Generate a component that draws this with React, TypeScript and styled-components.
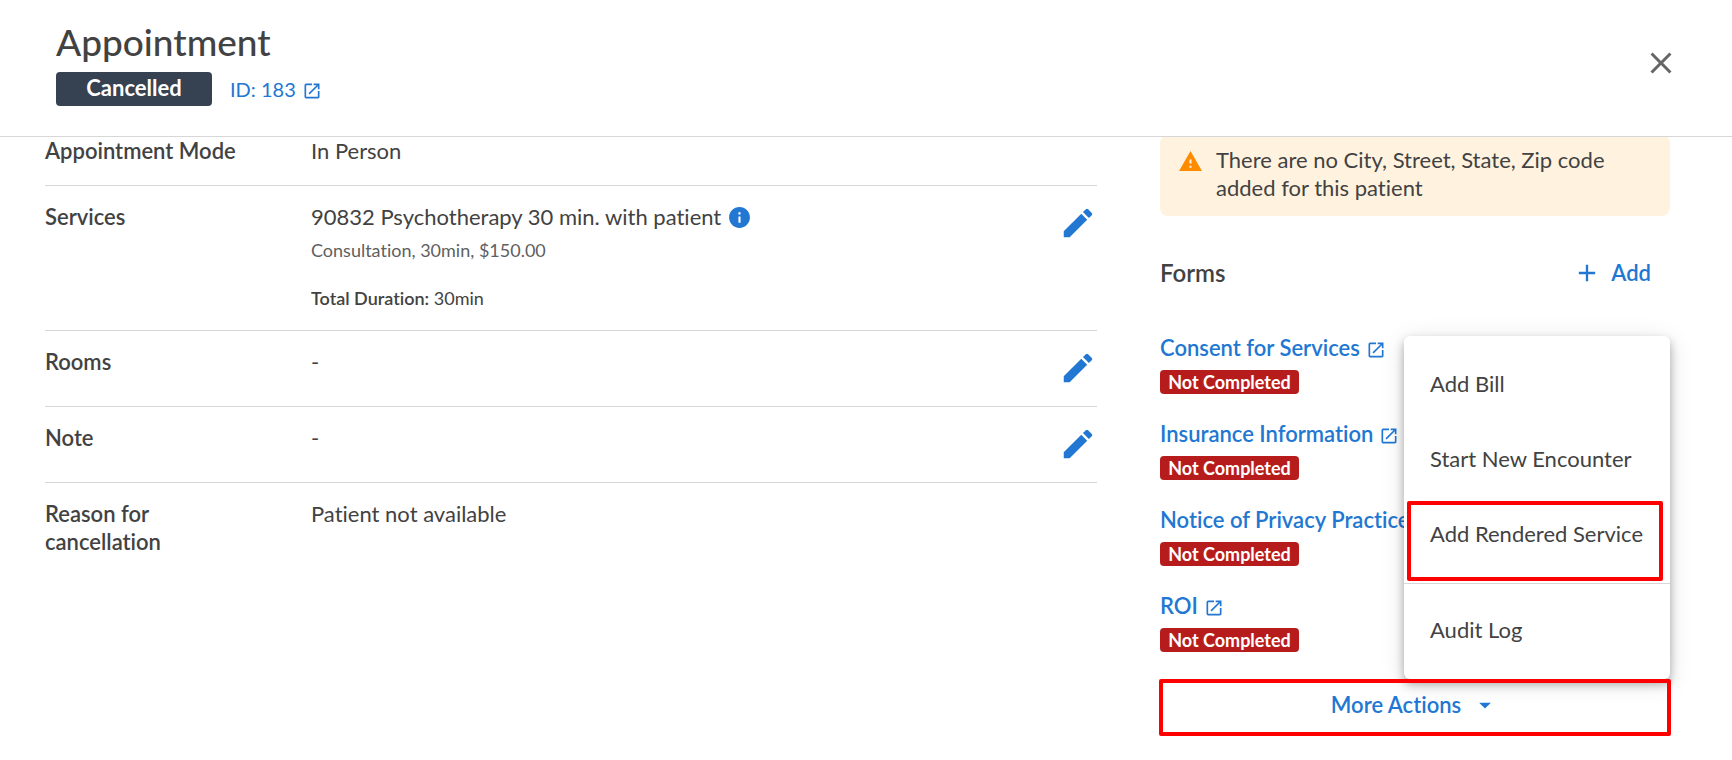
import React from 'react';
import styled, { createGlobalStyle } from 'styled-components';
import {
  MdAdd,
  MdArrowDropDown,
  MdClose,
  MdEdit,
  MdInfo,
  MdOpenInNew,
  MdWarning,
} from 'react-icons/md';

const color = {
  text: '#424242',
  muted: '#5f5f5f',
  link: '#2177d2',
  line: '#d7d7d7',
  slate: '#364152',
  danger: '#b71c1c',
  highlight: '#ff0000',
  warnBg: '#fff3e0',
  warn: '#ff8c00',
};

const GlobalStyle = createGlobalStyle`
  *, *::before, *::after { box-sizing: border-box; }
  body {
    margin: 0;
    background: #fff;
    color: ${color.text};
    font: 400 22px/28px Lato, "Open Sans", sans-serif;
    font-variant-ligatures: none;
  }
  h1, h2, p, ul, dl, dt, dd { margin: 0; padding: 0; font: inherit; }
  ul { list-style: none; }
  button { border: 0; background: none; padding: 0; font: inherit; color: inherit; cursor: pointer; }
  svg { display: block; flex: none; }
`;

const Header = styled.header`
  display: flex;
  align-items: center;
  justify-content: space-between;
  padding: 20px 53px 30px 56px;
  border-bottom: 1px solid ${color.line};
`;

const Title = styled.h1`
  && {
    font-size: 37px;
    font-weight: 500;
    line-height: 44px;
  }
`;

const HeaderMeta = styled.div`
  display: flex;
  align-items: center;
  gap: 18px;
  margin-top: 8px;
`;

const StatusBadge = styled.span`
  min-width: 156px;
  padding: 2px 28px 4px;
  border-radius: 4px;
  background: ${color.slate};
  color: #fff;
  font-weight: 700;
  text-align: center;
`;

const TextLink = styled.a<{ $strong?: boolean }>`
  display: inline-flex;
  align-items: center;
  gap: 6px;
  color: ${color.link};
  font-size: ${(p) => (p.$strong ? 22 : 20)}px;
  font-weight: ${(p) => (p.$strong ? 600 : 400)};
  text-decoration: none;
  white-space: nowrap;

  svg {
    margin-top: 4px;
  }
`;

const CloseButton = styled.button`
  && {
    color: #666;
  }
`;

const Content = styled.main`
  display: grid;
  grid-template-columns: minmax(0, 1fr) 510px;
  column-gap: 63px;
  padding: 0 62px 22px 45px;
  overflow: hidden;
`;

const Details = styled.dl``;

const Row = styled.div<{ $flush?: boolean }>`
  display: grid;
  grid-template-columns: 266px minmax(0, 1fr) auto;
  padding: ${(p) => (p.$flush ? '0 0 20px' : '17px 0 18px')};

  &:not(:last-child) {
    border-bottom: 1px solid ${color.line};
  }
`;

const Label = styled.dt`
  && {
    padding-right: 70px;
    font-weight: 600;
  }
`;

const ServiceName = styled.p`
  display: flex;
  align-items: center;
  gap: 6px;

  svg {
    color: ${color.link};
  }
`;

const SmallLine = styled.p<{ $muted?: boolean }>`
  && {
    margin-top: ${(p) => (p.$muted ? 5 : 20)}px;
    color: ${(p) => (p.$muted ? color.muted : color.text)};
    font-size: 18px;
  }

  b {
    font-weight: 600;
  }
`;

const EditButton = styled.button`
  && {
    display: flex;
    align-items: center;
    align-self: start;
    height: 40px;
    color: ${color.link};
  }
`;

const Side = styled.aside`
  margin-top: -2px;
`;

const Alert = styled.div`
  display: flex;
  gap: 13px;
  padding: 11px 50px 14px 18px;
  border-radius: 8px;
  background: ${color.warnBg};

  svg {
    margin-top: 3px;
    color: ${color.warn};
  }
`;

const FormsHeader = styled.div`
  display: flex;
  align-items: center;
  justify-content: space-between;
  margin-top: 43px;
  padding-right: 19px;
`;

const FormsTitle = styled.h2`
  && {
    font-size: 24px;
    font-weight: 600;
    line-height: 28px;
  }
`;

const AddButton = styled.button`
  && {
    display: flex;
    align-items: center;
    gap: 10px;
    color: ${color.link};
    font-weight: 600;
  }
`;

const FormList = styled.ul`
  && {
    margin-top: 47px;
  }
`;

const FormItem = styled.li`
  display: flex;
  flex-direction: column;
  align-items: flex-start;
  gap: 8px;
  padding-bottom: 26px;
`;

const FormBadge = styled.span`
  min-width: 139px;
  padding: 0 6px;
  border-radius: 4px;
  background: ${color.danger};
  color: #fff;
  font-size: 18px;
  font-weight: 700;
  line-height: 24px;
  text-align: center;
`;

const Actions = styled.div`
  position: relative;
  margin-top: 1px;
`;

const MoreButton = styled.button`
  && {
    display: flex;
    align-items: center;
    justify-content: center;
    gap: 10px;
    width: 100%;
    padding: 12px 0 17px;
    color: ${color.link};
    font-weight: 600;
  }

  &::after {
    content: '';
    position: absolute;
    inset: 0 -1px;
    z-index: 2;
    border: 4px solid ${color.highlight};
    border-radius: 2px;
  }
`;

const Menu = styled.ul`
  && {
    position: absolute;
    right: 0;
    bottom: 100%;
    z-index: 1;
    width: 266px;
    padding: 8px 0 14px;
  }
  border-radius: 6px;
  background: #fff;
  box-shadow: 0 5px 10px rgba(0, 0, 0, 0.3), 0 4px 24px rgba(0, 0, 0, 0.12);
`;

const MenuEntry = styled.li<{ $separated?: boolean }>`
  ${(p) =>
    p.$separated && `margin-top: 14px; padding-top: 6px; border-top: 1px solid ${color.line};`}
`;

const MenuButton = styled.button<{ $marked?: boolean }>`
  && {
    position: relative;
    width: 100%;
    padding: 26px 0 21px 26px;
    text-align: left;
    white-space: nowrap;
  }

  ${(p) =>
    p.$marked &&
    `&::after {
      content: '';
      position: absolute;
      inset: 7px 7px -12px 3px;
      border: 4px solid ${color.highlight};
      border-radius: 2px;
    }`}
`;

const forms = [
  'Consent for Services',
  'Insurance Information',
  'Notice of Privacy Practices',
  'ROI',
];

const menu = [
  { label: 'Add Bill' },
  { label: 'Start New Encounter' },
  { label: 'Add Rendered Service', marked: true },
  { label: 'Audit Log', separated: true },
];

function Edit({ name }: { name: string }) {
  return (
    <EditButton type="button" aria-label={`Edit ${name}`}>
      <MdEdit size={38} />
    </EditButton>
  );
}

export default function App() {
  return (
    <>
      <GlobalStyle />
      <Header>
        <div>
          <Title>Appointment</Title>
          <HeaderMeta>
            <StatusBadge>Cancelled</StatusBadge>
            <TextLink href="#appointment-183">
              ID: 183
              <MdOpenInNew size={20} />
            </TextLink>
          </HeaderMeta>
        </div>
        <CloseButton type="button" aria-label="Close">
          <MdClose size={36} />
        </CloseButton>
      </Header>
      <Content>
        <Details>
          <Row $flush>
            <Label>Appointment Mode</Label>
            <dd>In Person</dd>
          </Row>
          <Row>
            <Label>Services</Label>
            <dd>
              <ServiceName>
                90832 Psychotherapy 30 min. with patient
                <MdInfo size={25} />
              </ServiceName>
              <SmallLine $muted>Consultation, 30min, $150.00</SmallLine>
              <SmallLine>
                <b>Total Duration:</b> 30min
              </SmallLine>
            </dd>
            <Edit name="services" />
          </Row>
          <Row>
            <Label>Rooms</Label>
            <dd>-</dd>
            <Edit name="rooms" />
          </Row>
          <Row>
            <Label>Note</Label>
            <dd>-</dd>
            <Edit name="note" />
          </Row>
          <Row>
            <Label>Reason for cancellation</Label>
            <dd>Patient not available</dd>
          </Row>
        </Details>
        <Side>
          <Alert role="alert">
            <MdWarning size={25} />
            <p>There are no City, Street, State, Zip code added for this patient</p>
          </Alert>
          <FormsHeader>
            <FormsTitle>Forms</FormsTitle>
            <AddButton type="button">
              <MdAdd size={28} />
              Add
            </AddButton>
          </FormsHeader>
          <FormList>
            {forms.map((form) => (
              <FormItem key={form}>
                <TextLink $strong href="#form">
                  {form}
                  <MdOpenInNew size={20} />
                </TextLink>
                <FormBadge>Not Completed</FormBadge>
              </FormItem>
            ))}
          </FormList>
          <Actions>
            <MoreButton type="button" aria-haspopup="menu" aria-expanded="true">
              More Actions
              <MdArrowDropDown size={28} />
            </MoreButton>
            <Menu role="menu">
              {menu.map((item) => (
                <MenuEntry key={item.label} role="none" $separated={item.separated}>
                  <MenuButton type="button" role="menuitem" $marked={item.marked}>
                    {item.label}
                  </MenuButton>
                </MenuEntry>
              ))}
            </Menu>
          </Actions>
        </Side>
      </Content>
    </>
  );
}
